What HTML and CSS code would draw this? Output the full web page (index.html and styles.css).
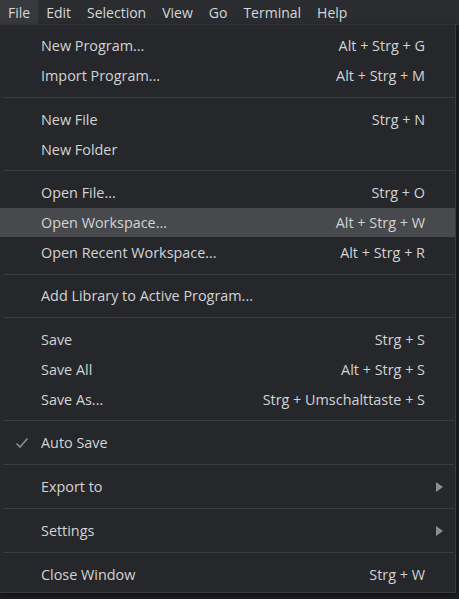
FILE: index.html
```html
<!DOCTYPE html>
<html>
<head>
<meta charset="utf-8">
<link rel="stylesheet" href="styles.css">
</head>
<body>
<div class="app">
  <div class="menubar">
    <span class="mb-item active">File</span>
    <span class="mb-item">Edit</span>
    <span class="mb-item">Selection</span>
    <span class="mb-item">View</span>
    <span class="mb-item">Go</span>
    <span class="mb-item">Terminal</span>
    <span class="mb-item">Help</span>
  </div>
  <div class="editor"></div>
  <div class="menu">
    <div class="row"><span class="label">New Program...</span><span class="key">Alt + Strg + G</span></div>
    <div class="row"><span class="label">Import Program...</span><span class="key">Alt + Strg + M</span></div>
    <div class="sep"></div>
    <div class="row"><span class="label">New File</span><span class="key">Strg + N</span></div>
    <div class="row"><span class="label">New Folder</span></div>
    <div class="sep"></div>
    <div class="row"><span class="label">Open File...</span><span class="key">Strg + O</span></div>
    <div class="row hover"><span class="label">Open Workspace...</span><span class="key">Alt + Strg + W</span></div>
    <div class="row"><span class="label">Open Recent Workspace...</span><span class="key">Alt + Strg + R</span></div>
    <div class="sep"></div>
    <div class="row"><span class="label">Add Library to Active Program...</span></div>
    <div class="sep"></div>
    <div class="row"><span class="label">Save</span><span class="key">Strg + S</span></div>
    <div class="row"><span class="label">Save All</span><span class="key">Alt + Strg + S</span></div>
    <div class="row"><span class="label">Save As...</span><span class="key">Strg + Umschalttaste + S</span></div>
    <div class="sep"></div>
    <div class="row"><svg class="check" width="14" height="12" viewBox="0 0 14 12"><path d="M1.5 6.5 L5 10 L12.5 1.5" fill="none" stroke="#8a8b8e" stroke-width="1.6"/></svg><span class="label">Auto Save</span></div>
    <div class="sep"></div>
    <div class="row"><span class="label">Export to</span><span class="arrow"></span></div>
    <div class="sep"></div>
    <div class="row"><span class="label">Settings</span><span class="arrow"></span></div>
    <div class="sep"></div>
    <div class="row"><span class="label">Close Window</span><span class="key">Strg + W</span></div>
  </div>
</div>
</body>
</html>
```
FILE: styles.css
```css
html, body {
  margin: 0;
  padding: 0;
  background: #1e1f22;
  width: 459px;
  height: 599px;
  overflow: hidden;
}
.app {
  position: relative;
  width: 459px;
  height: 599px;
  font-family: "Open Sans", "Noto Sans", sans-serif;
  font-size: 14.4px;
  color: #d2d3d5;
}
.menubar {
  display: flex;
  height: 24px;
  background: #2b2c30;
  border-bottom: 1px solid #36373b;
}
.mb-item {
  display: flex;
  align-items: center;
  padding: 0 8px;
  color: #d6d7d9;
  font-size: 14px;
}
.mb-item.active {
  background: #38393d;
}
.editor {
  height: 574px;
  background: #1e1f22;
}
.menu {
  position: absolute;
  left: 0;
  top: 25px;
  width: 456px;
  height: 568px;
  padding-top: 6px;
  box-sizing: border-box;
  background: #26272b;
  border-right: 1px solid #3a3b3f;
  border-bottom: 1px solid #3a3b3f;
  box-shadow: 0 2px 6px rgba(0,0,0,0.5);
}
.row {
  position: relative;
  display: flex;
  align-items: center;
  height: 29.7px;
  padding: 0 30px 0 41px;
}
.row.hover {
  background: #48494d;
}
.label {
  flex: 1;
  white-space: nowrap;
}
.key {
  white-space: nowrap;
}
.sep {
  height: 1px;
  margin: 6.5px 1px 6.6px 3px;
  background: #3a3b3f;
}
.check {
  position: absolute;
  left: 15px;
  top: 9px;
}
.arrow {
  position: absolute;
  right: 12px;
  top: 10px;
  width: 0;
  height: 0;
  border-top: 5px solid transparent;
  border-bottom: 5px solid transparent;
  border-left: 7px solid #8c8d90;
}
```
